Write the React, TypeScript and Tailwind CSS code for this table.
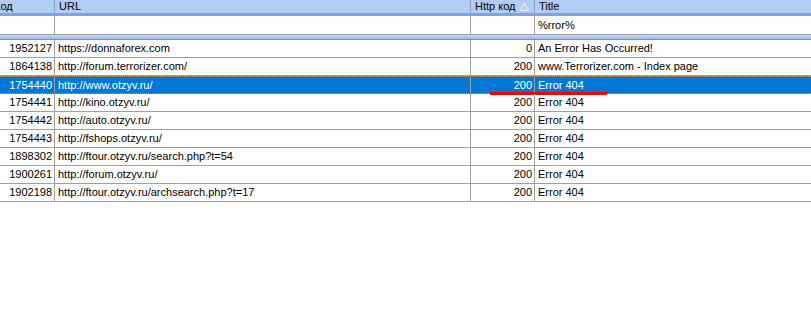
import React from "react";

type Row = { id: string; url: string; code: string; title: string };

const rows: Row[] = [
  { id: "1952127", url: "https://donnaforex.com", code: "0", title: "An Error Has Occurred!" },
  { id: "1864138", url: "http://forum.terrorizer.com/", code: "200", title: "www.Terrorizer.com - Index page" },
  { id: "1754440", url: "http://www.otzyv.ru/", code: "200", title: "Error 404" },
  { id: "1754441", url: "http://kino.otzyv.ru/", code: "200", title: "Error 404" },
  { id: "1754442", url: "http://auto.otzyv.ru/", code: "200", title: "Error 404" },
  { id: "1754443", url: "http://fshops.otzyv.ru/", code: "200", title: "Error 404" },
  { id: "1898302", url: "http://ftour.otzyv.ru/search.php?t=54", code: "200", title: "Error 404" },
  { id: "1900261", url: "http://forum.otzyv.ru/", code: "200", title: "Error 404" },
  { id: "1902198", url: "http://ftour.otzyv.ru/archsearch.php?t=17", code: "200", title: "Error 404" },
];

const SELECTED = 2;

export default function App() {
  return (
    <div
      className="w-[811px] h-[309px] bg-white overflow-hidden text-[11px] text-black leading-none"
      style={{ fontFamily: '"Liberation Sans", Arial, sans-serif' }}
    >
      {/* HEADER */}
      <div className="flex h-[16px] bg-[#b3cdf2] border-b-[3px] border-[#7fa2e2]">
        <div className="w-[55px] shrink-0 overflow-hidden border-r border-[#7f9fd8] flex items-center">
          <span className="ml-[-6px]">Код</span>
        </div>
        <div className="w-[416px] shrink-0 border-r border-[#7f9fd8] flex items-center pl-[4px]">URL</div>
        <div className="w-[64px] shrink-0 border-r border-[#7f9fd8] flex items-center pl-[4px] gap-[5px]">
          <span>Http код</span>
          <svg width="9" height="8" viewBox="0 0 9 8" className="shrink-0">
            <path d="M4.5 0.5 L8.5 7.5 L0.5 7.5 Z" fill="none" stroke="#f2f6fd" strokeWidth="1" />
          </svg>
        </div>
        <div className="flex-1 flex items-center pl-[4px]">Title</div>
      </div>

      {/* FILTER ROW */}
      <div className="flex h-[19px] border-b border-[#a0a0a0]">
        <div className="w-[55px] shrink-0 border-r border-[#a0a0a0]" />
        <div className="w-[416px] shrink-0 border-r border-[#a0a0a0]" />
        <div className="w-[64px] shrink-0 border-r border-[#a0a0a0]" />
        <div className="flex-1 flex items-center pl-[3px]">%rror%</div>
      </div>

      {/* SEPARATOR BAND */}
      <div className="h-[5px] bg-gradient-to-b from-[#c4d8f5] to-[#9dbbea] border-b border-[#6f93d8]" />

      {/* ROWS */}
      {rows.map((r, i) => {
        const sel = i === SELECTED;
        return (
          <div
            key={r.id}
            className={
              sel
                ? "relative flex h-[18px] bg-[#0078d7] text-white border-y border-dotted border-[#c99a66]"
                : "relative flex h-[18px] border-b border-[#a0a0a0]"
            }
          >
            <div className="w-[55px] shrink-0 border-r border-[#a0a0a0] flex items-center justify-end pr-[2px]">
              {r.id}
            </div>
            <div className="w-[416px] shrink-0 border-r border-[#a0a0a0] flex items-center pl-[3px]">{r.url}</div>
            <div className="w-[64px] shrink-0 border-r border-[#a0a0a0] flex items-center justify-end pr-[2px]">
              {r.code}
            </div>
            <div className="flex-1 flex items-center pl-[3px]">{r.title}</div>
            {sel && <div className="absolute left-[490px] top-[15px] w-[117px] h-[3px] bg-[#ff0000]" />}
          </div>
        );
      })}
    </div>
  );
}
